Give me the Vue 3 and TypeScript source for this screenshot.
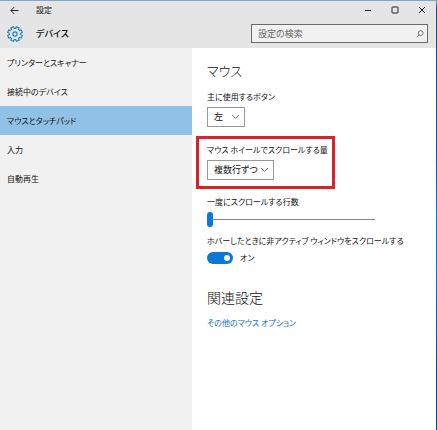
<script setup lang="ts">
import { ref } from 'vue'

interface NavItem {
  id: string
  label: string
}

const navItems: NavItem[] = [
  { id: 'printers', label: 'プリンターとスキャナー' },
  { id: 'connected', label: '接続中のデバイス' },
  { id: 'mouse', label: 'マウスとタッチパッド' },
  { id: 'typing', label: '入力' },
  { id: 'autoplay', label: '自動再生' },
]

const activeItem = ref('mouse')
const search = ref('')
const primaryButton = ref('左')
const scrollMode = ref('複数行ずつ')
const lines = ref(1)
const scrollInactive = ref(true)

// Outline of an eight-toothed gear centred on (12, 12).
function gearPath(): string {
  const points: string[] = []
  for (let i = 0; i < 8; i++) {
    const base = i * 45 + 22.5
    for (const [offset, radius] of [[-14, 8.6], [-11, 11.2], [11, 11.2], [14, 8.6]]) {
      const angle = ((base + offset) * Math.PI) / 180
      points.push(`${(12 + radius * Math.cos(angle)).toFixed(2)} ${(12 + radius * Math.sin(angle)).toFixed(2)}`)
    }
  }
  return `M${points.join('L')}Z`
}
const gear = gearPath()
</script>

<template>
  <div class="window">
    <header class="top">
      <div class="titlebar">
        <button class="back" type="button" aria-label="戻る">
          <svg width="9" height="9" viewBox="0 0 9 9"><path d="M8.5 4.5H1M4.3 1 .9 4.5 4.3 8" /></svg>
        </button>
        <span class="app-name">設定</span>
        <div class="controls">
          <button type="button" aria-label="最小化">
            <svg width="8" height="8" viewBox="0 0 8 8"><path d="M1 4.5h6" /></svg>
          </button>
          <button type="button" aria-label="最大化">
            <svg width="8" height="8" viewBox="0 0 8 8"><rect x="1" y="1" width="6" height="6" rx=".5" /></svg>
          </button>
          <button type="button" aria-label="閉じる">
            <svg width="8" height="8" viewBox="0 0 8 8"><path d="M1 1l6 6M7 1 1 7" /></svg>
          </button>
        </div>
      </div>
      <div class="section-bar">
        <svg class="gear" width="16" height="16" viewBox="0 0 24 24">
          <path :d="gear" />
          <circle cx="12" cy="12" r="3.2" />
        </svg>
        <span class="section-name">デバイス</span>
        <label class="search">
          <input v-model="search" type="text" placeholder="設定の検索" aria-label="設定の検索" />
          <svg width="8" height="8" viewBox="0 0 9 9"><circle cx="5.3" cy="3.5" r="2.7" /><path d="M3.4 5.4.8 8.2" /></svg>
        </label>
      </div>
    </header>

    <div class="body">
      <nav class="nav">
        <button
          v-for="item in navItems"
          :key="item.id"
          type="button"
          :class="{ active: item.id === activeItem }"
          @click="activeItem = item.id"
        >{{ item.label }}</button>
      </nav>

      <main class="content">
        <h1>マウス</h1>
        <div class="field">
          <label for="primary">主に使用するボタン</label>
          <div class="select select-short">
            <select id="primary" v-model="primaryButton">
              <option>左</option>
              <option>右</option>
            </select>
            <svg width="9" height="6" viewBox="0 0 9 6"><path d="M1 1l3.5 3.5L8 1" /></svg>
          </div>
        </div>

        <div class="field highlighted">
          <label for="mode">マウス ホイールでスクロールする量</label>
          <div class="select select-long">
            <select id="mode" v-model="scrollMode">
              <option>複数行ずつ</option>
              <option>1 画面ずつ</option>
            </select>
            <svg width="9" height="6" viewBox="0 0 9 6"><path d="M1 1l3.5 3.5L8 1" /></svg>
          </div>
        </div>

        <div class="field range-field">
          <label for="lines">一度にスクロールする行数</label>
          <input id="lines" v-model="lines" class="range" type="range" min="1" max="100" />
        </div>

        <div class="field">
          <label for="inactive">ホバーしたときに非アクティブ ウィンドウをスクロールする</label>
          <div class="toggle-row">
            <input id="inactive" v-model="scrollInactive" class="toggle" type="checkbox" role="switch" />
            <span>{{ scrollInactive ? 'オン' : 'オフ' }}</span>
          </div>
        </div>

        <h2>関連設定</h2>
        <a href="#mouse-options">その他のマウス オプション</a>
      </main>
    </div>
  </div>
</template>

<style>
body {
  margin: 0;
}
</style>

<style scoped>
* {
  box-sizing: border-box;
}
.window {
  display: flex;
  flex-direction: column;
  min-height: 100vh;
  border-top: 1px solid #86acd0;
  border-right: 1px solid;
  border-image: linear-gradient(#86acd0 0, #174a80 2%, #0a4f92 35%, #0878d4 50%, #0878d4 62%, #084580 85%) 1;
  background: #fff;
  color: #111;
  font-family: "Noto Sans CJK JP", sans-serif;
  font-size: 8px;
  line-height: 14px;
  font-feature-settings: "palt";
}
button,
input,
select {
  margin: 0;
  padding: 0;
  border: 0;
  border-radius: 0;
  background: none;
  color: inherit;
  font: inherit;
  font-feature-settings: inherit;
}
svg {
  flex: none;
  fill: none;
  stroke: #222;
}
.top {
  background: #e5e5e5;
}
.titlebar {
  display: flex;
  align-items: center;
  height: 18px;
}
.back {
  display: flex;
  width: 36px;
  padding-left: 10px;
}
.app-name {
  flex: 1;
}
.controls {
  display: flex;
  padding-right: 1px;
}
.controls button {
  display: flex;
  justify-content: center;
  width: 27px;
}
.section-bar {
  display: flex;
  align-items: center;
  height: 29px;
  padding: 0 8px 0 7px;
}
.gear {
  stroke: #1b7fd0;
  stroke-width: 1.7;
  stroke-linejoin: round;
}
.section-name {
  flex: 1;
  padding-left: 13px;
  font-size: 9px;
  font-weight: 500;
}
.search {
  display: flex;
  align-items: center;
  width: 177px;
  height: 19px;
  padding: 0 3px 0 6px;
  border: 1px solid #6a6a6a;
  background: #f1f1f1;
}
.search svg {
  stroke: #666;
}
.search input {
  flex: 1;
  min-width: 0;
  outline: 0;
  font-size: 9px;
}
.search input::placeholder {
  color: #666;
  opacity: 1;
}
.body {
  display: flex;
  flex: 1;
}
.nav {
  display: flex;
  flex: none;
  flex-direction: column;
  width: 192px;
  background: #f1f1f1;
}
.nav button {
  height: 29px;
  padding-left: 7px;
  text-align: left;
}
.nav .active {
  background: #91c1e7;
}
.content {
  flex: 1;
  min-width: 0;
  padding: 13px 15px;
}
h1,
h2 {
  margin: 0 0 9px;
  font-size: 14px;
  font-weight: 300;
  line-height: 20px;
}
h1 {
  font-size: 13px;
}
h2 {
  margin-top: 22px;
}
.field label {
  display: block;
  white-space: nowrap;
}
.select {
  position: relative;
  height: 20px;
  margin-top: 3px;
}
.select-short {
  width: 38px;
}
.select-long {
  width: 67px;
}
.select select {
  appearance: none;
  width: 100%;
  height: 100%;
  padding-left: 6px;
  border: 1px solid #999;
  background: #fff;
  font-size: 9px;
}
.select svg {
  position: absolute;
  top: 7px;
  right: 5px;
  stroke: #777;
  pointer-events: none;
}
.highlighted {
  width: 139px;
  margin: 9px 0 6px -11px;
  padding: 4px 8px 6px;
  border: 3px solid #d8232a;
}
.range-field {
  margin-bottom: 7px;
}
.range {
  appearance: none;
  display: block;
  width: 168px;
  height: 16px;
  margin-top: 2px;
  background: linear-gradient(#888, #888) center / 100% 1px no-repeat;
}
.range::-webkit-slider-thumb {
  appearance: none;
  width: 6px;
  height: 15px;
  border-radius: 3px;
  background: #0a78d6;
}
.toggle-row {
  display: flex;
  align-items: center;
  gap: 7px;
  margin-top: 3px;
}
.toggle {
  appearance: none;
  display: flex;
  align-items: center;
  width: 26px;
  height: 12px;
  padding: 0 3px;
  border-radius: 6px;
  background: #888;
}
.toggle::before {
  content: "";
  width: 6px;
  height: 6px;
  border-radius: 50%;
  background: #fff;
}
.toggle:checked {
  justify-content: flex-end;
  background: #0a78d6;
}
a {
  color: #0f6fbe;
  text-decoration: none;
}
</style>
